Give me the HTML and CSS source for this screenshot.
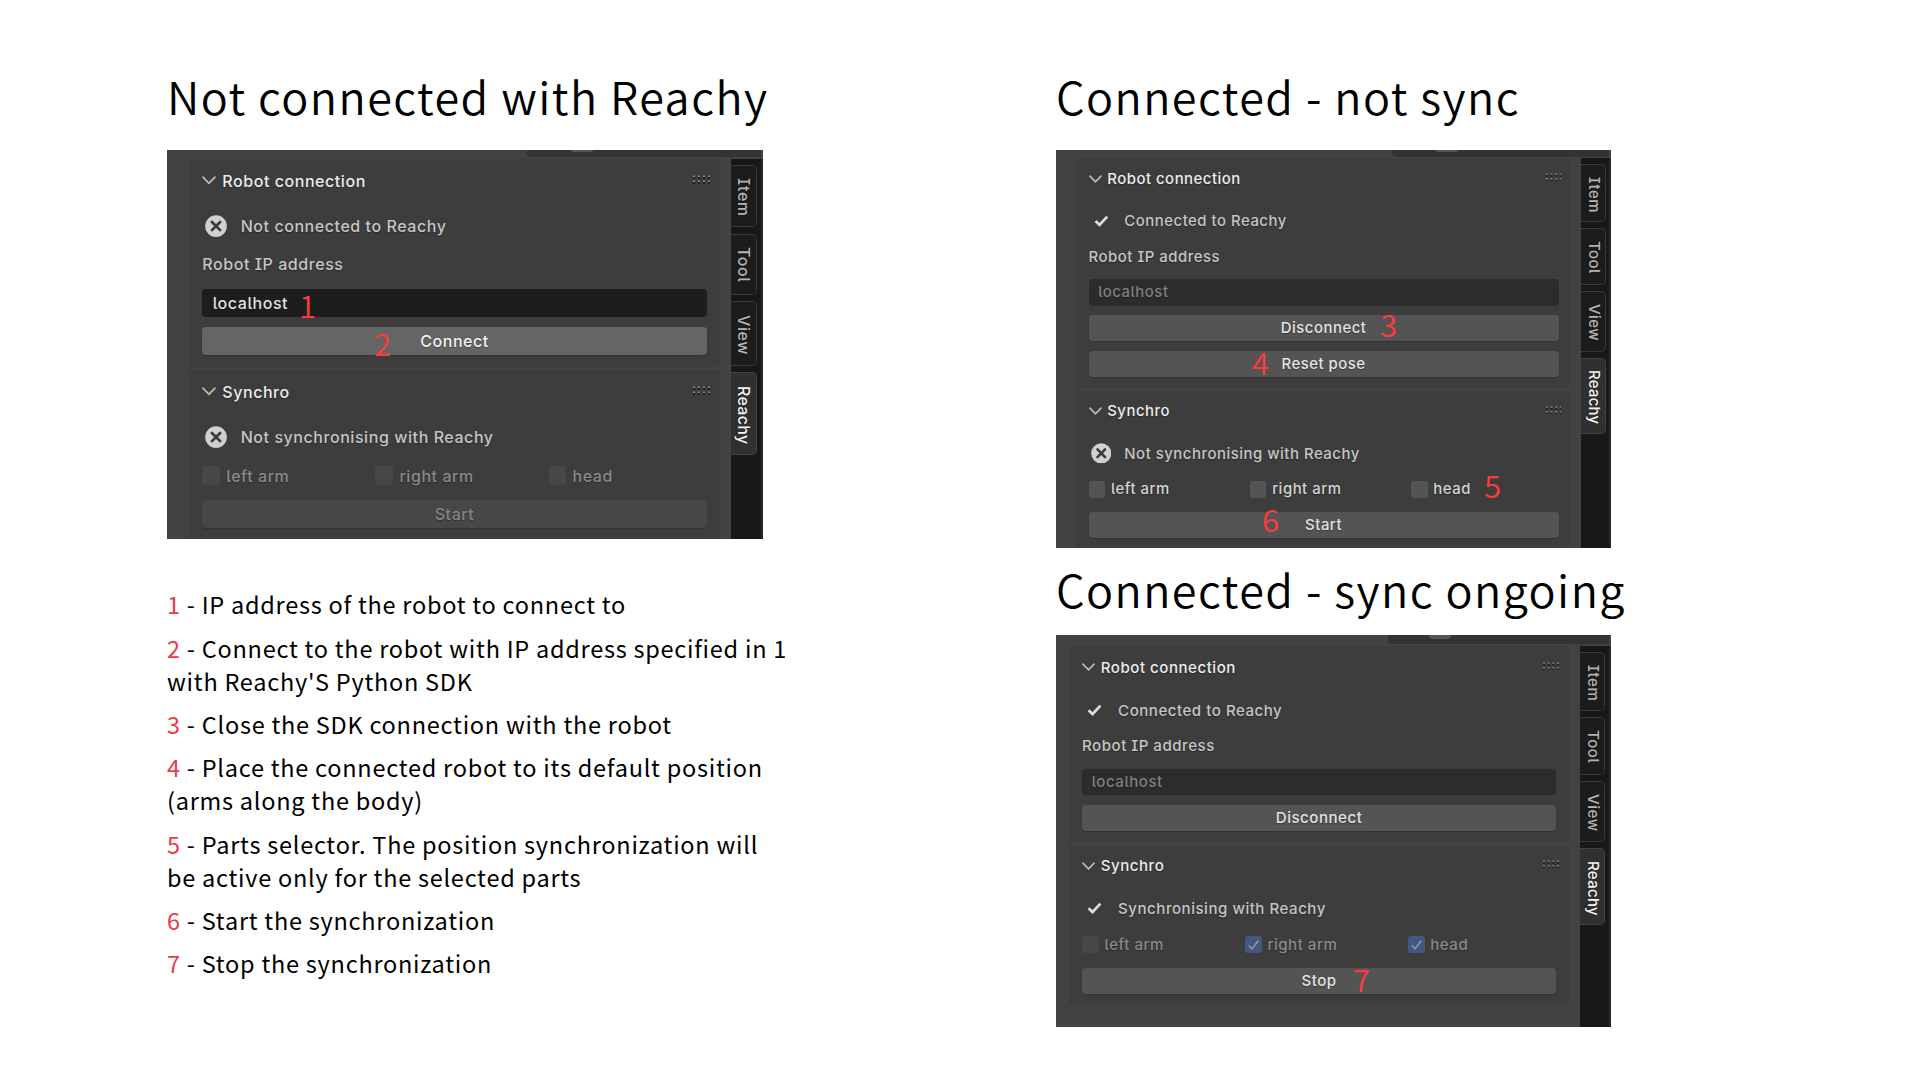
FILE: index.html
```html
<!DOCTYPE html>
<html lang="en">
<head>
<meta charset="utf-8">
<title>Reachy Blender add-on panels</title>
<link rel="stylesheet" href="styles.css">
</head>
<body>
<svg width="0" height="0" class="defs">
  <symbol id="chevron" viewBox="0 0 14 9"><path d="M1 1.2 7 7.4 13 1.2" fill="none" stroke="#bdbdbd" stroke-width="1.7" stroke-linecap="round"/></symbol>
  <symbol id="cross" viewBox="0 0 22 22"><circle cx="11" cy="11" r="10.8" fill="#d0d0d0"/><path d="M6.9 6.9l8.2 8.2M15.1 6.9l-8.2 8.2" stroke="#3a3a3a" stroke-width="2.7" stroke-linecap="round"/></symbol>
  <symbol id="check" viewBox="0 0 22 22"><path d="M4.8 10.8 9.1 14.8 17.4 6" fill="none" stroke="#dcdcdc" stroke-width="2.9"/></symbol>
  <symbol id="tick" viewBox="0 0 18 18"><path d="M4 9.8 7.5 13.2 14.2 4.6" fill="none" stroke="#8b93a3" stroke-width="1.8"/></symbol>
  <symbol id="grip" viewBox="0 0 17 9"><g fill="#1f1f1f"><path d="M0 2h2v2H0zM5 2h2v2H5zM10 2h2v2h-2zM15 2h2v2h-2zM0 7h2v2H0zM5 7h2v2H5zM10 7h2v2h-2zM15 7h2v2h-2z"/></g><g fill="#8a8a8a"><path d="M0 .5h2V2H0zM5 .5h2V2H5zM10 .5h2V2h-2zM15 .5h2V2h-2zM0 5.5h2V7H0zM5 5.5h2V7H5zM10 5.5h2V7h-2zM15 5.5h2V7h-2z"/></g></symbol>
</svg>
<main class="page">
  <div class="column left">
    <h1 class="title t1">Not connected with Reachy</h1>
    <div class="shot shot-a">
      <div class="topstrip"><i class="pill"></i></div>
      <div class="body">
        <div class="region">
          <section class="section">
            <header class="head"><svg class="chev"><use href="#chevron"/></svg><span>Robot connection</span><svg class="grip"><use href="#grip"/></svg></header>
            <div class="row status"><svg class="icon"><use href="#cross"/></svg><span>Not connected to Reachy</span></div>
            <div class="row">Robot IP address</div>
            <div class="row field">localhost</div>
            <div class="row button hover">Connect</div>
          </section>
          <section class="section">
            <header class="head"><svg class="chev"><use href="#chevron"/></svg><span>Synchro</span><svg class="grip"><use href="#grip"/></svg></header>
            <div class="row status"><svg class="icon"><use href="#cross"/></svg><span>Not synchronising with Reachy</span></div>
            <div class="row checks off"><span class="opt"><i class="box"></i>left arm</span><span class="opt"><i class="box"></i>right arm</span><span class="opt"><i class="box"></i>head</span></div>
            <div class="row button disabled">Start</div>
          </section>
        </div>
        <nav class="tabs"><span class="tab item">Item</span><span class="tab tool">Tool</span><span class="tab view">View</span><span class="tab reachy">Reachy</span></nav>
      </div>
      <b class="mark m1">1</b><b class="mark m2">2</b>
    </div>
    <div class="legend">
      <p><b>1</b> - IP address of the robot to connect to</p>
      <p><b>2</b> - Connect to the robot with IP address specified in 1<br>with Reachy'S Python SDK</p>
      <p><b>3</b> - Close the SDK connection with the robot</p>
      <p><b>4</b> - Place the connected robot to its default position<br>(arms along the body)</p>
      <p><b>5</b> - Parts selector. The position synchronization will<br>be active only for the selected parts</p>
      <p><b>6</b> - Start the synchronization</p>
      <p><b>7</b> - Stop the synchronization</p>
    </div>
  </div>
  <div class="column right">
    <h1 class="title t2">Connected - not sync</h1>
    <div class="shot shot-b">
      <div class="topstrip"><i class="pill"></i></div>
      <div class="body">
        <div class="region">
          <section class="section">
            <header class="head"><svg class="chev"><use href="#chevron"/></svg><span>Robot connection</span><svg class="grip"><use href="#grip"/></svg></header>
            <div class="row status"><svg class="icon"><use href="#check"/></svg><span>Connected to Reachy</span></div>
            <div class="row">Robot IP address</div>
            <div class="row field locked">localhost</div>
            <div class="row button">Disconnect</div>
            <div class="row button">Reset pose</div>
          </section>
          <section class="section">
            <header class="head"><svg class="chev"><use href="#chevron"/></svg><span>Synchro</span><svg class="grip"><use href="#grip"/></svg></header>
            <div class="row status"><svg class="icon"><use href="#cross"/></svg><span>Not synchronising with Reachy</span></div>
            <div class="row checks"><span class="opt"><i class="box"></i>left arm</span><span class="opt"><i class="box"></i>right arm</span><span class="opt"><i class="box"></i>head</span></div>
            <div class="row button">Start</div>
          </section>
        </div>
        <nav class="tabs"><span class="tab item">Item</span><span class="tab tool">Tool</span><span class="tab view">View</span><span class="tab reachy">Reachy</span></nav>
      </div>
      <b class="mark m3">3</b><b class="mark m4">4</b><b class="mark m5">5</b><b class="mark m6">6</b>
    </div>
    <h1 class="title t3">Connected - sync ongoing</h1>
    <div class="shot shot-c">
      <div class="topstrip"><i class="pill"></i></div>
      <div class="body">
        <div class="region">
          <section class="section">
            <header class="head"><svg class="chev"><use href="#chevron"/></svg><span>Robot connection</span><svg class="grip"><use href="#grip"/></svg></header>
            <div class="row status"><svg class="icon"><use href="#check"/></svg><span>Connected to Reachy</span></div>
            <div class="row">Robot IP address</div>
            <div class="row field locked">localhost</div>
            <div class="row button">Disconnect</div>
          </section>
          <section class="section">
            <header class="head"><svg class="chev"><use href="#chevron"/></svg><span>Synchro</span><svg class="grip"><use href="#grip"/></svg></header>
            <div class="row status"><svg class="icon"><use href="#check"/></svg><span>Synchronising with Reachy</span></div>
            <div class="row checks off"><span class="opt"><i class="box"></i>left arm</span><span class="opt"><i class="box on"><svg><use href="#tick"/></svg></i>right arm</span><span class="opt"><i class="box on"><svg><use href="#tick"/></svg></i>head</span></div>
            <div class="row button">Stop</div>
          </section>
        </div>
        <nav class="tabs"><span class="tab item">Item</span><span class="tab tool">Tool</span><span class="tab view">View</span><span class="tab reachy">Reachy</span></nav>
      </div>
      <b class="mark m7">7</b>
    </div>
  </div>
</main>
</body>
</html>
```
FILE: styles.css
```css
* { box-sizing: border-box; }
body { margin: 0; background: #fff; color: #000; font-family: "Noto Sans CJK JP", "Open Sans", sans-serif; }
.defs { display: block; height: 0; }
.page { width: 1920px; height: 1080px; overflow: hidden; padding: 73px 0 0 167px; display: grid; grid-template-columns: 889px 1fr; }
.title { margin: 0; font-size: 45px; line-height: 45px; font-weight: 350; letter-spacing: 1.45px; white-space: nowrap; }
.t1, .t2 { margin-bottom: 32px; }
.t3 { margin: 18px 0 24.4px; }

.shot { position: relative; overflow: hidden; display: flex; flex-direction: column; background: #424242; color: #c6c6c6; font-family: Inter, "Liberation Sans", sans-serif; font-weight: 450; font-feature-settings: "ss02", "cv05", "cv08"; letter-spacing: .035em; text-shadow: 0 1px 1px rgba(0,0,0,.35); }
.shot-a { width: 596px; height: 389.3px; font-size: 16px; --lead: 22px; --indent: 13.3px; --edge: 23.8px; --bar: 32.5px; }
.shot-b { width: 555px; height: 397.6px; font-size: 14.9px; --lead: 20px; --indent: 12.6px; --edge: 22.5px; --bar: 30px; }
.shot-c { width: 555px; height: 392px; font-size: 15.05px; --lead: 13px; --indent: 13px; --edge: 23.5px; --bar: 31.4px; }
.topstrip { flex: none; height: 7px; margin: 0 2px 1.5px auto; width: 234px; background: #333; border-radius: 0 0 0 4px; }
.pill { display: block; width: 22px; height: 2px; margin-left: 44px; background: #555; border-radius: 0 0 4px 4px; }
.shot-b .topstrip { height: 6.5px; margin-bottom: 1.9px; width: 217px; }
.shot-c .topstrip { height: 9px; margin-bottom: 2.5px; width: 221px; }
.shot-c .pill { height: 4px; margin-left: 41px; }
.body { flex: 1; display: flex; min-height: 0; }
.region { flex: 1; min-width: 0; padding: 0 11px 0 var(--lead); display: flex; flex-direction: column; gap: .19em; }
.section { background: #3d3d3d; border-radius: 4px; padding: .5em calc(var(--edge) - 11px) .75em var(--indent); display: flex; flex-direction: column; gap: .64em; }
.head, .row { height: 1.75em; flex: none; display: flex; align-items: center; white-space: nowrap; }
.head { color: #ededed; font-weight: 500; margin-bottom: .46em; gap: .38em; }
.chev { width: .87em; height: .56em; }
.grip { width: 1.06em; height: .56em; margin: 0 -.2em .17em auto; }
.status { gap: .87em; padding-left: .15em; }
.icon { width: 1.38em; height: 1.38em; }
.field { background: #1d1d1d; border-radius: 4px; padding-left: .65em; color: #e2e2e2; }
.locked { background: #2c2c2c; color: #808080; }
.button { background: #545454; border-radius: 4px; justify-content: center; color: #e4e4e4; box-shadow: 0 1px 1px rgba(0,0,0,.2); }
.hover { background: #656565; color: #f2f2f2; }
.disabled { background: #474747; color: #858585; }
.checks { display: grid; grid-template-columns: 10.82em 10.82em 1fr; color: #d4d4d4; }
.off { color: #8a8a8a; }
.opt { display: flex; align-items: center; gap: .38em; }
.box { width: 1.12em; height: 1.16em; border-radius: 3px; background: #545454; }
.off .box { background: #474747; }
.off .on { background: #425880; }
.box svg { display: block; width: 100%; height: 100%; }
.tabs { flex: none; width: var(--bar); background: #181818; border-right: 2px solid #262626; padding-top: .38em; display: flex; flex-direction: column; gap: .4em; }
.tab { width: 1.68em; writing-mode: vertical-rl; padding-top: .8em; background: #1c1c1c; border: 1.5px solid #393939; border-left: 0; border-radius: 0 5px 5px 0; color: #b4b4b4; line-height: 1.5em; }
.item { height: 3.92em; }
.tool { height: 3.82em; }
.view { height: 4.05em; }
.reachy { height: 5.15em; background: #303030; border-color: #424242; color: #f4f4f4; letter-spacing: .02em; }

/* numbered callouts laid over the screenshots */
.mark { position: absolute; font: 350 31px/31px "Noto Sans CJK JP", sans-serif; letter-spacing: 0; color: #ff3a3e; text-shadow: none; }
.m1 { left: 132px; top: 139px; }
.m2 { left: 207px; top: 177px; }
.m3 { left: 324px; top: 158px; }
.m4 { left: 196px; top: 196px; }
.m5 { left: 428px; top: 319px; }
.m6 { left: 206px; top: 353px; }
.m7 { left: 297px; top: 328px; }

.legend { margin-top: 49px; font-size: 23.5px; line-height: 33px; letter-spacing: .75px; white-space: nowrap; }
.legend p { margin: 0 0 10.33px; }
.legend b { font-weight: 400; color: #ec3a44; }
```
